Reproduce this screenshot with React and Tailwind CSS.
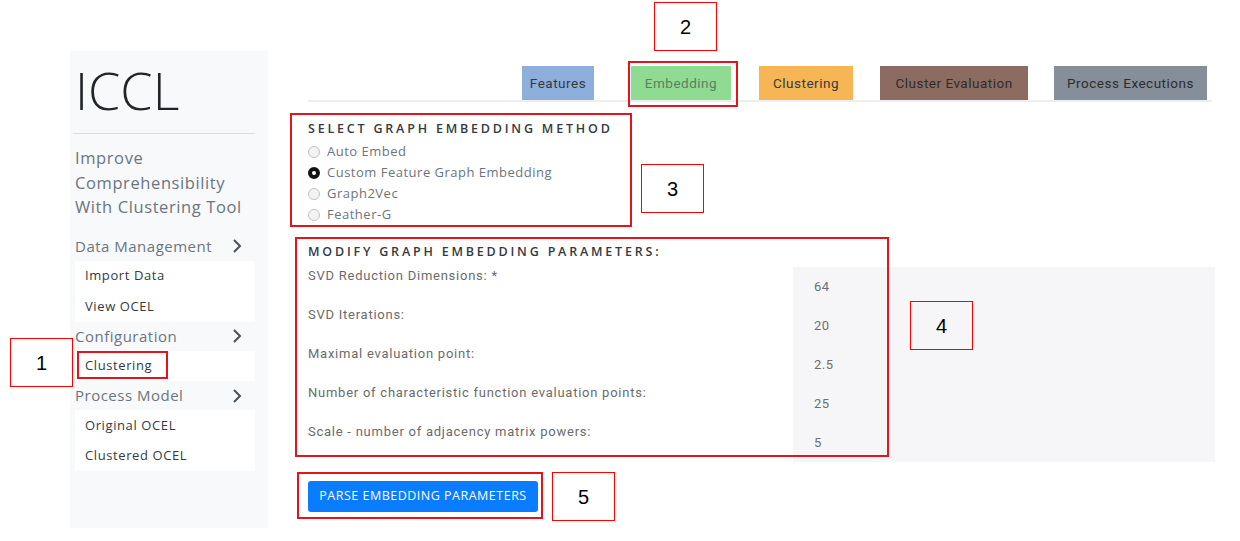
import React from 'react';

const sans = "font-['Open_Sans','Noto_Sans',sans-serif]";
const rob = "font-['Roboto','Liberation_Sans',sans-serif]";

const Chevron = () => (
  <svg width="10" height="16" viewBox="0 0 10 16" className="mr-[21px]">
    <path d="M2 2l6 6-6 6" fill="none" stroke="#495057" strokeWidth="2" />
  </svg>
);

const NavGroup = ({ title, items }) => (
  <div>
    <div className="h-[29px] flex items-center justify-between">
      <span className="text-[15px] text-[#6c757d] tracking-[0.5px]">{title}</span>
      <Chevron />
    </div>
    <div className="bg-white w-[180px]">
      {items.map((it) => (
        <div key={it} className="h-[30.5px] flex items-center pl-[10px] text-[13px] text-[#343a40] tracking-[0.6px]">
          {it}
        </div>
      ))}
    </div>
  </div>
);

const Tab = ({ label, cls, ml }) => (
  <div className={`h-[34px] flex items-center justify-center text-[13.5px] tracking-[0.5px] ${rob} ${cls} ${ml}`}>
    {label}
  </div>
);

const Radio = ({ label, checked }) => (
  <div className="h-[21px] flex items-center">
    {checked ? (
      <span className="w-[12px] h-[12px] rounded-full border-[4px] border-[#111] bg-white" />
    ) : (
      <span className="w-[12px] h-[12px] rounded-full border border-[#c4c4c4] bg-[#f3f3f3]" />
    )}
    <span className="ml-[7px] text-[13px] text-[#6c757d] tracking-[0.5px]">{label}</span>
  </div>
);

const Note = ({ n, cls }) => (
  <div className={`absolute w-[63px] h-[49px] border border-[#ff0000] flex items-center justify-center text-[20px] text-black font-['Liberation_Sans',sans-serif] ${cls}`}>
    {n}
  </div>
);

const params = [
  ['SVD Reduction Dimensions: *', '64'],
  ['SVD Iterations:', '20'],
  ['Maximal evaluation point:', '2.5'],
  ['Number of characteristic function evaluation points:', '25'],
  ['Scale - number of adjacency matrix powers:', '5'],
];

export default function App() {
  return (
    <div className={`relative w-[1240px] h-[541px] bg-white overflow-hidden flex ${sans}`}>
      {/* sidebar */}
      <aside className="ml-[70px] mt-[51px] w-[198px] h-[477px] bg-[#f8f9fa] px-[5px]">
        <div className="mt-[13px] h-[50px] leading-none text-[52px] font-light text-[#212529]">ICCL</div>
        <div className="mt-[19px] mr-[8px] -ml-[2px] h-px bg-[#dcdde0]" />
        <div className="mt-[12px] text-[16.5px] leading-[24.5px] text-[#6c757d] tracking-[0.6px]">
          Improve
          <br />
          Comprehensibility
          <br />
          With Clustering Tool
        </div>
        <div className="mt-[12px]">
          <NavGroup title="Data Management" items={['Import Data', 'View OCEL']} />
          <NavGroup title="Configuration" items={['Clustering']} />
          <NavGroup title="Process Model" items={['Original OCEL', 'Clustered OCEL']} />
        </div>
      </aside>

      {/* main */}
      <main className="ml-[40px] mt-[66px] w-[907px]">
        <div className="w-[904px] flex border-b-2 border-[#eeeeee] pl-[214px]">
          <Tab label="Features" cls="w-[72px] bg-[#8eaedb] text-[#343a40]" ml="" />
          <Tab label="Embedding" cls="w-[100px] bg-[#8fdb92] text-[#5f7d60]" ml="ml-[37px]" />
          <Tab label="Clustering" cls="w-[94px] bg-[#f6b655] text-[#343a40]" ml="ml-[28px]" />
          <Tab label="Cluster Evaluation" cls="w-[148px] bg-[#8c6c60] text-[#2d2d2d]" ml="ml-[27px]" />
          <Tab label="Process Executions" cls="w-[153px] bg-[#868f99] text-[#2d2d2d]" ml="ml-[26px]" />
        </div>

        <div className="mt-[19px] text-[12.5px] font-semibold tracking-[2.8px] text-[#343a40] leading-[16px]">
          SELECT GRAPH EMBEDDING METHOD
        </div>
        <div className="mt-[4px]">
          <Radio label="Auto Embed" />
          <Radio label="Custom Feature Graph Embedding" checked />
          <Radio label="Graph2Vec" />
          <Radio label="Feather-G" />
        </div>

        <div className="mt-[19px] text-[12.5px] font-semibold tracking-[2.8px] text-[#343a40] leading-[16px]">
          MODIFY GRAPH EMBEDDING PARAMETERS:
        </div>
        <div className="mt-[7px] flex">
          <div className={`w-[485px] ${rob}`}>
            {params.map(([l]) => (
              <div key={l} className="h-[39px] text-[13px] text-[#6b6b6b] tracking-[0.75px] leading-[18px]">
                {l}
              </div>
            ))}
          </div>
          <div className={`w-[422px] bg-[#f6f6f8] pl-[21px] ${rob}`}>
            {params.map(([l, v]) => (
              <div key={l} className="h-[39px] pt-[11px] text-[13px] text-[#6f6f6f] tracking-[0.5px] leading-[18px]">
                {v}
              </div>
            ))}
          </div>
        </div>

        <button className="mt-[19px] w-[230px] h-[31px] rounded-[3px] bg-[#0a7cff] text-white text-[12.5px] tracking-[0.5px]">
          PARSE EMBEDDING PARAMETERS
        </button>
      </main>

      {/* annotation highlights */}
      <div className="absolute left-[77px] top-[351px] w-[91px] h-[28px] border-2 border-[#e3141e]" />
      <div className="absolute left-[628px] top-[61px] w-[110px] h-[46px] border-2 border-[#e3141e]" />
      <div className="absolute left-[290px] top-[113px] w-[342px] h-[114px] border-2 border-[#e3141e]" />
      <div className="absolute left-[295px] top-[237px] w-[594px] h-[220px] border-2 border-[#e3141e]" />
      <div className="absolute left-[297px] top-[472px] w-[246px] h-[47px] border-2 border-[#e3141e]" />

      <Note n="1" cls="left-[10px] top-[338px] bg-white" />
      <Note n="2" cls="left-[654px] top-[2px] bg-white" />
      <Note n="3" cls="left-[641px] top-[164px] bg-white" />
      <Note n="4" cls="left-[910px] top-[301px]" />
      <Note n="5" cls="left-[552px] top-[472px] bg-white" />
    </div>
  );
}
